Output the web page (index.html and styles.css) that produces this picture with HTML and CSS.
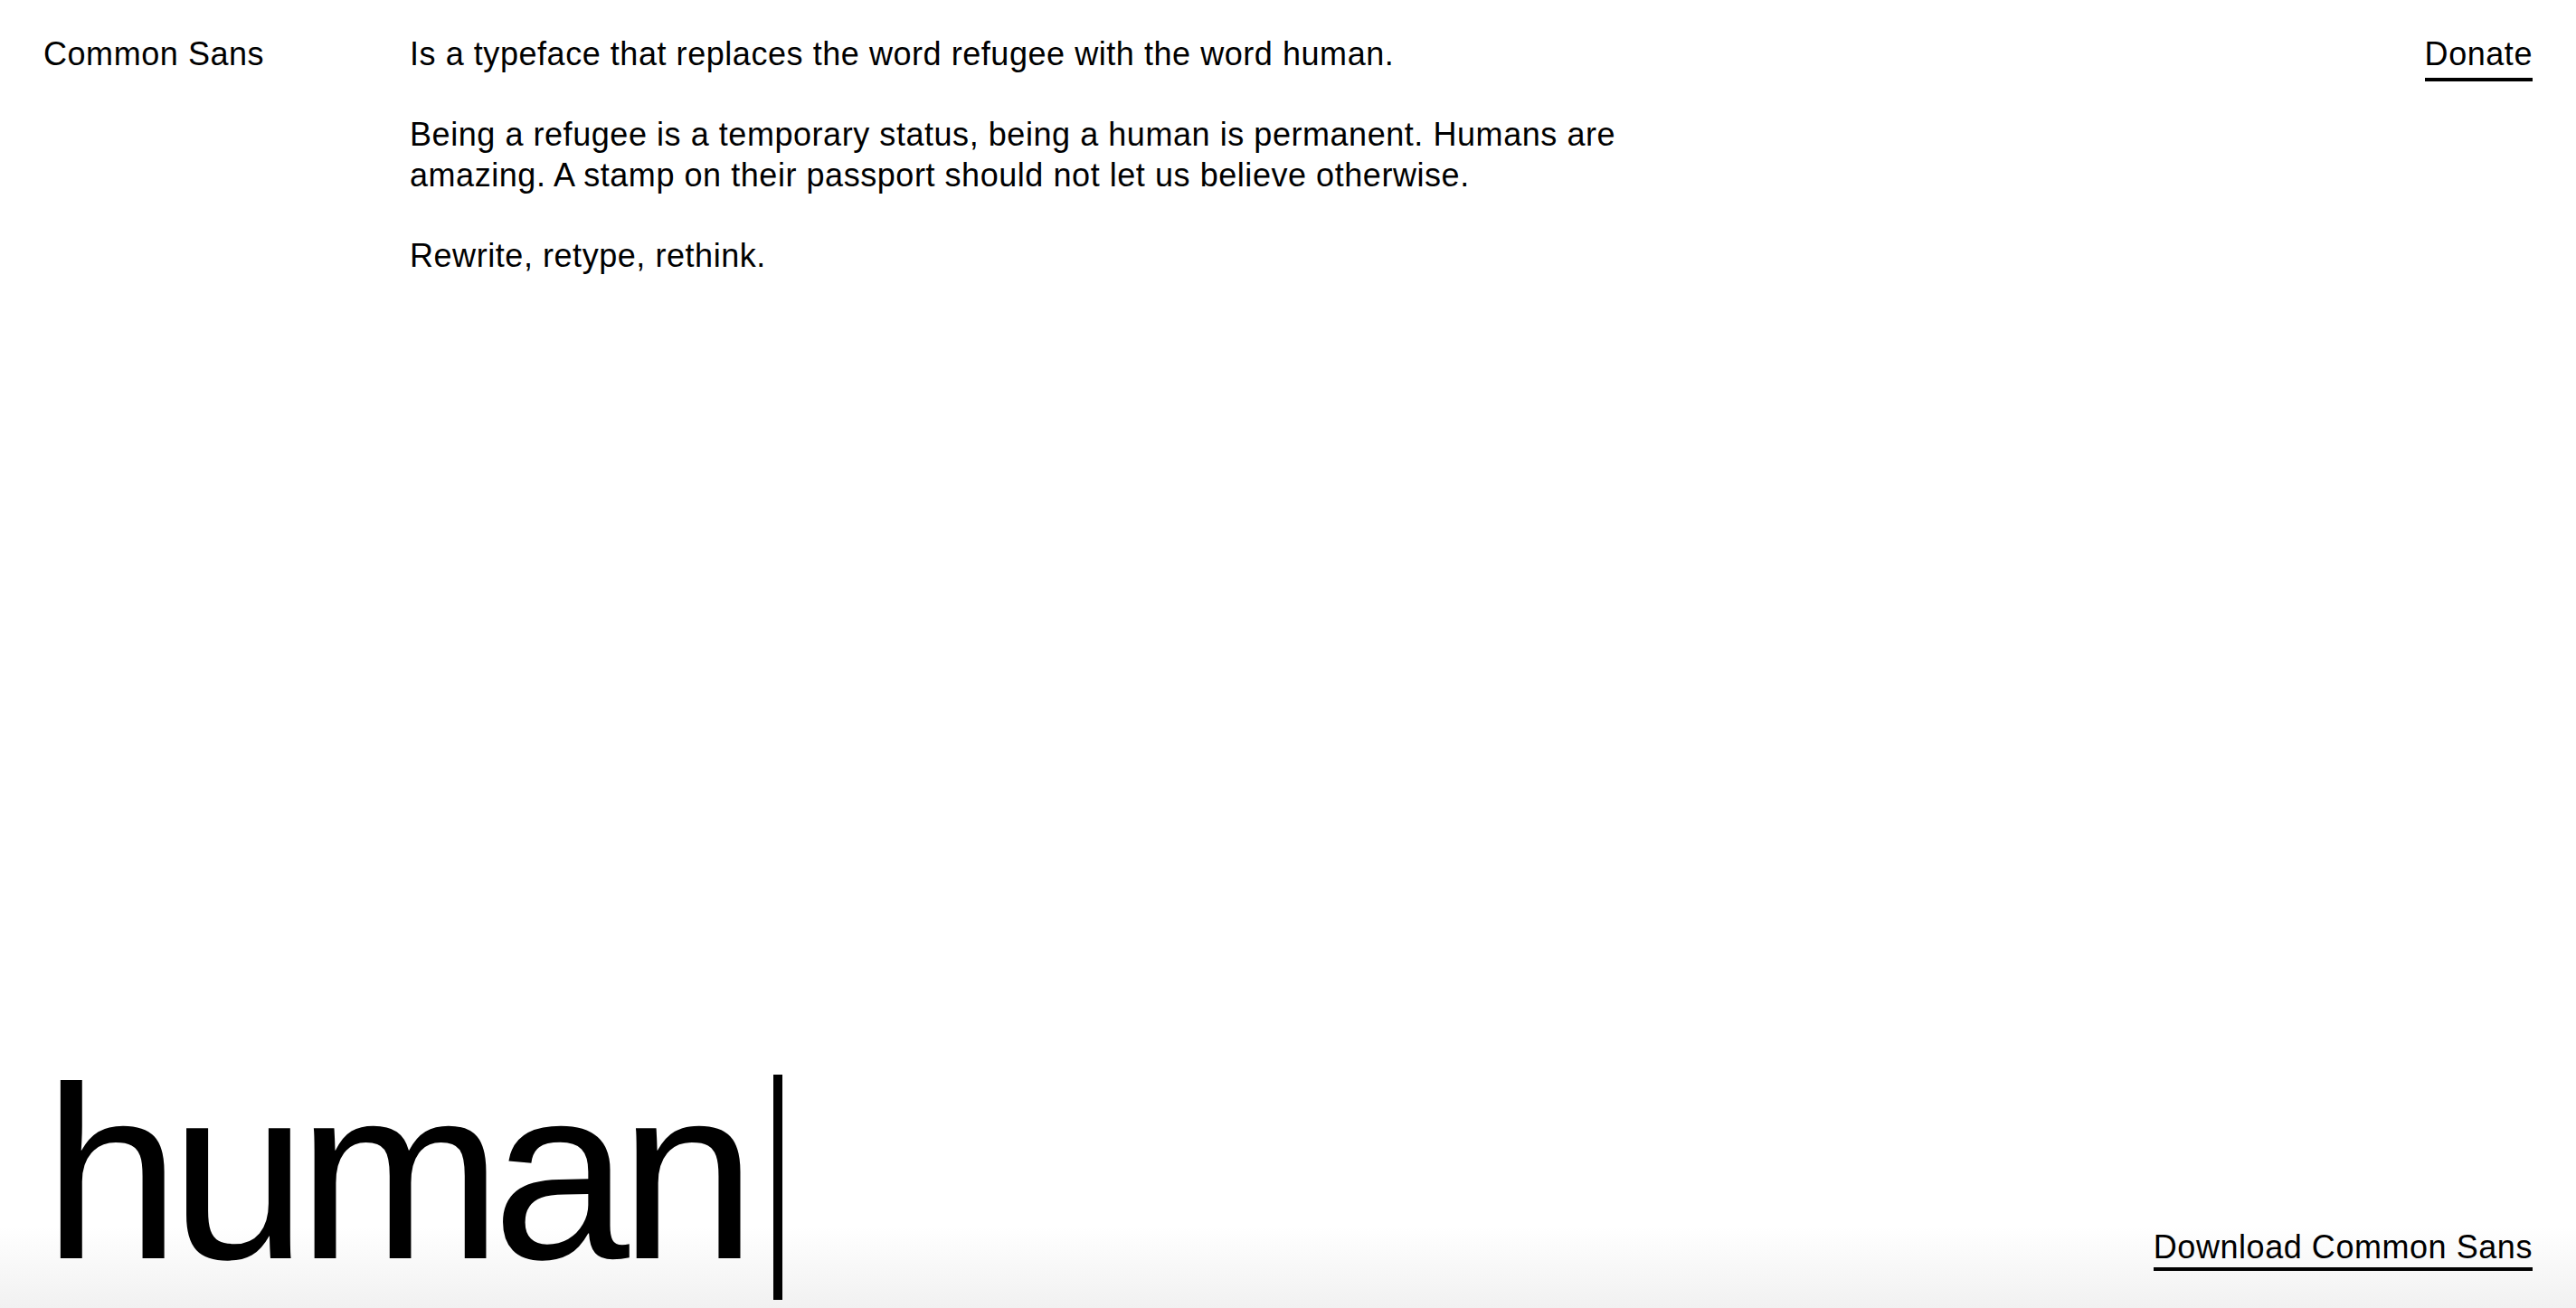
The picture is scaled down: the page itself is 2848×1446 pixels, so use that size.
FILE: index.html
```html
<!DOCTYPE html>
<html lang="en">
<head>
<meta charset="utf-8">
<title>Common Sans</title>
<link rel="stylesheet" href="styles.css">
</head>
<body>
<div class="page">
  <header class="top">
    <div class="brand">Common Sans</div>
    <div class="intro">
      <p>Is a typeface that replaces the word refugee with the word human.</p>
      <p>Being a refugee is a temporary status, being a human is permanent. Humans are amazing. A stamp on their passport should not let us believe otherwise.</p>
      <p>Rewrite, retype, rethink.</p>
    </div>
    <a class="link donate" href="#">Donate</a>
  </header>
  <footer class="bottom">
    <h1 class="word">human<span class="caret"></span></h1>
    <a class="link download" href="#">Download Common Sans</a>
  </footer>
</div>
</body>
</html>
```
FILE: styles.css
```css
html, body {
  margin: 0;
  padding: 0;
}

body {
  background: #fff;
  color: #000;
  font-family: "Liberation Sans", Arial, sans-serif;
  font-size: 36px;
  line-height: 45px;
  letter-spacing: 0.55px;
}

.page {
  height: 100vh;
  display: flex;
  flex-direction: column;
  justify-content: space-between;
  background: linear-gradient(to bottom, #fff 0, #fff calc(100% - 90px), #f1f1f1 100%);
  box-sizing: border-box;
  padding-bottom: 9px;
}

.top {
  display: grid;
  grid-template-columns: 405px 1fr auto;
  align-items: start;
  padding: 37px 48px 0 48px;
}

.intro {
  max-width: 1400px;
}

.intro p {
  margin: 0 0 44px 0;
}

.intro p:last-child {
  margin-bottom: 0;
}

.link {
  color: #000;
  text-decoration: none;
  border-bottom: 4px solid #000;
}

.donate {
  justify-self: end;
  padding-bottom: 4px;
}

.bottom {
  display: flex;
  justify-content: space-between;
  align-items: baseline;
  padding: 0 48px;
}

.word {
  margin: 0;
  font-weight: 400;
  font-size: 272px;
  line-height: 272px;
  letter-spacing: -0.04em;
}

.caret {
  display: inline-block;
  width: 10px;
  height: 249px;
  background: #000;
  margin-left: 30px;
  vertical-align: -46px;
}

.download {
  line-height: 45px;
}
```
